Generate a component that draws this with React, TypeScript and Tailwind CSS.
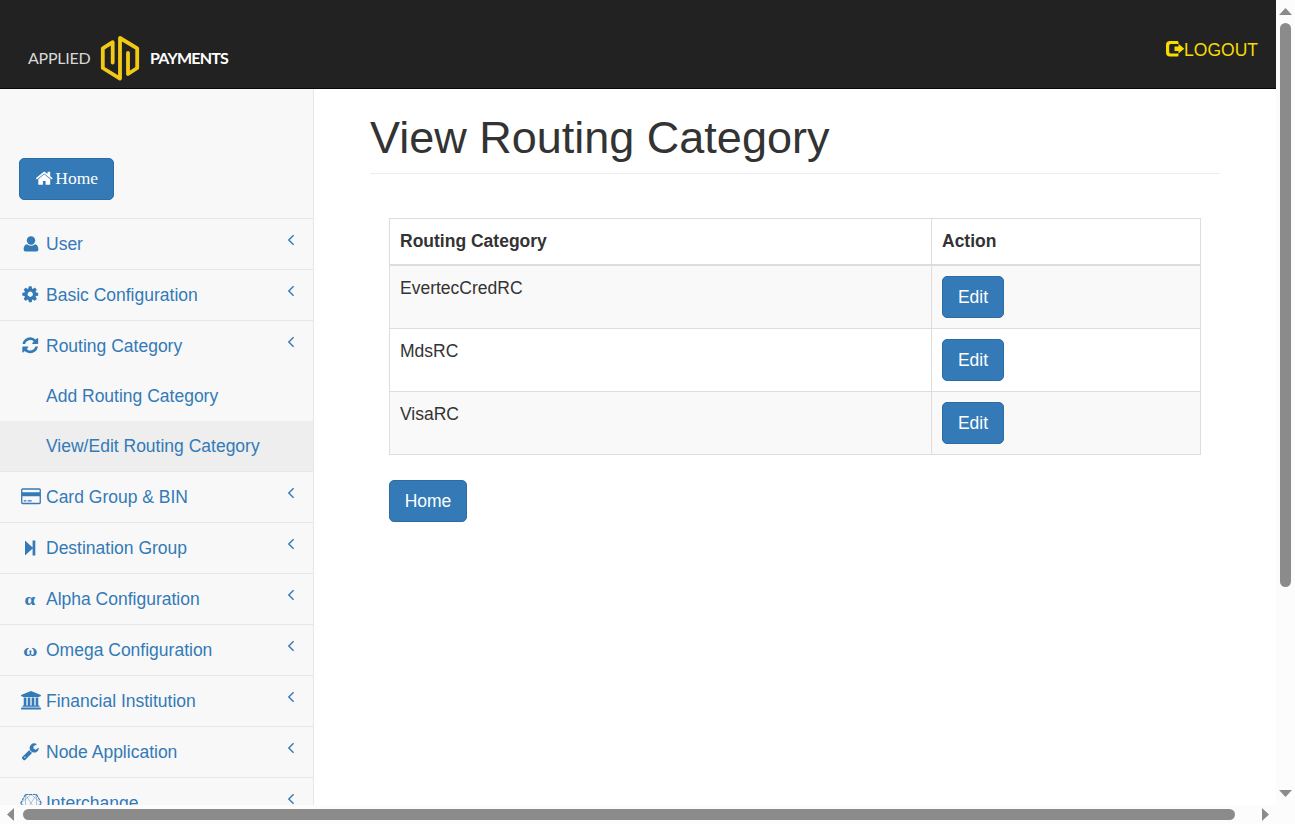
import React from 'react';

const P = {
  home: 'M1472 992v480q0 26-19 45t-45 19h-384v-384h-256v384h-384q-26 0-45-19t-19-45v-480q0-1 .5-3t.5-3l575-474 575 474q1 2 1 6zm223-69l-62 74q-8 9-21 11h-3q-13 0-21-7l-692-577-692 577q-12 8-24 7-13-2-21-11l-62-74q-8-10-7-23.5t11-21.5l719-599q32-26 76-26t76 26l244 204v-195q0-14 9-23t23-9h192q14 0 23 9t9 23v408l219 182q10 8 11 21.5t-7 23.5z',
  user: 'M1536 1399q0 109-62.5 187t-150.5 78h-854q-88 0-150.5-78t-62.5-187q0-85 8.5-160.5t31.5-152 58.5-131 94-89 134.5-34.5q131 128 313 128t313-128q76 0 134.5 34.5t94 89 58.5 131 31.5 152 8.5 160.5zm-256-887q0 159-112.5 271.5t-271.5 112.5-271.5-112.5-112.5-271.5 112.5-271.5 271.5-112.5 271.5 112.5 112.5 271.5z',
  cog: 'M1152 896q0-106-75-181t-181-75-181 75-75 181 75 181 181 75 181-75 75-181zm512-109v222q0 12-8 23t-20 13l-185 28q-19 54-39 91 35 50 107 138 10 12 10 25t-9 23q-27 37-99 108t-94 71q-12 0-26-9l-138-108q-44 23-91 38-16 136-29 186-7 28-36 28h-222q-14 0-24.5-8.5t-11.5-21.5l-28-184q-49-16-90-37l-141 107q-10 9-25 9-14 0-25-11-126-114-165-168-7-10-7-23 0-12 8-23 15-21 51-66.5t54-70.5q-27-50-41-99l-183-27q-13-2-21-12.5t-8-23.5v-222q0-12 8-23t19-13l186-28q14-46 39-92-40-57-107-138-10-12-10-24 0-10 9-23 26-36 98.5-107.5t94.5-71.5q13 0 26 10l138 107q44-23 91-38 16-136 29-186 7-28 36-28h222q14 0 24.5 8.5t11.5 21.5l28 184q49 16 90 37l142-107q9-9 24-9 13 0 25 10 129 119 165 170 7 8 7 22 0 12-8 23-15 21-51 66.5t-54 70.5q26 50 41 98l183 28q13 2 21 12.5t8 23.5z',
  refresh: 'M1639 1056q0 5-1 7-64 268-268 434.5t-478 166.5q-146 0-282.5-55t-243.5-157l-129 129q-19 19-45 19t-45-19-19-45v-448q0-26 19-45t45-19h448q26 0 45 19t19 45-19 45l-137 137q71 66 161 102t187 36q134 0 250-65t186-179q11-17 53-117 8-23 30-23h192q13 0 22.5 9.5t9.5 22.5zm25-800v448q0 26-19 45t-45 19h-448q-26 0-45-19t-19-45 19-45l138-138q-148-137-349-137-134 0-250 65t-186 179q-11 17-53 117-8 23-30 23h-199q-13 0-22.5-9.5t-9.5-22.5v-7q65-268 270-434.5t480-166.5q146 0 284 55.5t245 156.5l130-129q19-19 45-19t45 19 19 45z',
  card: 'M1760 128q66 0 113 47t47 113v1216q0 66-47 113t-113 47h-1600q-66 0-113-47t-47-113v-1216q0-66 47-113t113-47h1600zm-1600 128q-13 0-22.5 9.5t-9.5 22.5v224h1664v-224q0-13-9.5-22.5t-22.5-9.5h-1600zm1600 1280q13 0 22.5-9.5t9.5-22.5v-608h-1664v608q0 13 9.5 22.5t22.5 9.5h1600zm-1504-128v-128h256v128h-256zm384 0v-128h384v128h-384z',
  bank: 'M960 0l960 384v128h-128q0 26-20.5 45t-48.5 19h-1526q-28 0-48.5-19t-20.5-45h-128v-128zm-704 640h256v768h128v-768h256v768h128v-768h256v768h128v-768h256v768h59q28 0 48.5 19t20.5 45v64h-1664v-64q0-26 20.5-45t48.5-19h59v-768zm1595 960q28 0 48.5 19t20.5 45v128h-1920v-128q0-26 20.5-45t48.5-19h1782z',
  wrench: 'M448 1472q0-26-19-45t-45-19-45 19-19 45 19 45 45 19 45-19 19-45zm644-420l-682 682q-37 37-90 37-52 0-91-37l-106-108q-38-36-38-90 0-53 38-91l681-681q39 98 114.5 173.5t173.5 114.5zm634-435q0 39-23 106-47 134-164.5 217.5t-258.5 83.5q-185 0-316.5-131.5t-131.5-316.5 131.5-316.5 316.5-131.5q58 0 121.5 16.5t107.5 46.5q16 11 16 28t-16 28l-293 169v224l193 107q5-3 79-48.5t135.5-81 70.5-35.5q15 0 23.5 10t8.5 25z',
};

function Glyph({ d, wide = false }: { d: string; wide?: boolean }) {
  return (
    <svg viewBox={wide ? '0 0 1920 1792' : '0 0 1792 1792'} className={wide ? 'mb-px ml-px h-[18.500px] w-[20px]' : 'mb-px ml-px h-[18.500px] w-[18.500px]'} fill="currentColor">
      <path d={d} />
    </svg>
  );
}

function Person() {
  return (
    <svg viewBox="0 0 16 16" className="ml-px h-4 w-4" fill="currentColor">
      <circle cx="8" cy="4.500" r="4.200" />
      <path d="M4 8.300Q8 11.300 12 8.300 15.400 9 15.400 13.500 15.400 15.600 13.500 15.600H2.500Q.6 15.600.6 13.500.6 9 4 8.300z" />
    </svg>
  );
}

function StepForward() {
  return (
    <svg viewBox="0 0 12 16" className="h-4 w-3" fill="currentColor">
      <path d="M1 .5 8.600 7.600V.6h2.700v14.800H8.600V8.400L1 15.500z" />
    </svg>
  );
}

function Mesh() {
  return (
    <svg viewBox="0 0 22 20" className="ml-px h-5 w-[22px] shrink-0" fill="none" stroke="currentColor">
      <path d="M5.500 1.500h11l4.700 8.500-4.700 8.500h-11L.8 10z" strokeWidth="1.1" strokeDasharray="3 .6" />
      <path d="M5.500 1.500 16.500 18.500M16.500 1.500 5.500 18.500M5.500 2v16M16.500 2v16M1 10l10-8.500L21 10l-10 8.500z" strokeWidth=".4" />
    </svg>
  );
}

function Greek({ children }: { children: string }) {
  return <span className="mt-px scale-x-110 font-['Liberation_Serif',serif] text-[17.500px] font-bold">{children}</span>;
}

function Row({ icon, label, children }: { icon: React.ReactNode; label: string; children?: React.ReactNode }) {
  return (
    <li className="border-b border-[#e7e7e7]">
      <a className="flex h-[50px] items-center pl-[19px] pr-[18px]">
        <span className="flex w-[22px] shrink-0 items-center justify-center">{icon}</span>
        <span className="ml-[5px] flex-1 whitespace-nowrap">{label}</span>
        <svg viewBox="0 0 8 12" className="mb-[8px] h-3 w-2" fill="none" stroke="currentColor" strokeWidth="1.4">
          <path d="M6.600 1.200 1.800 6l4.800 4.800" />
        </svg>
      </a>
      {children}
    </li>
  );
}

const btn =
  'flex h-[42px] items-center justify-center rounded-[5px] border border-[#2e6da4] bg-[#337ab7] text-white';

function Logo() {
  return (
    <div className="flex h-[46px] items-center font-['Lato',sans-serif] text-[16px] leading-none text-white">
      <span className="w-[72px] whitespace-nowrap pl-px font-normal text-[#d8d8d8] tracking-[-0.250px]">APPLIED</span>
      <svg viewBox="99 34.600 42 47" className="h-[47px] w-[42px]" fill="none" stroke="#f2ca13" strokeWidth="3.800" strokeLinejoin="round" strokeLinecap="round">
        <path d="M112.700 62.200V41.800L102.800 48v19.600L120 78.200V37.600L137.200 48v19.600L128 73.600V52.500" />
      </svg>
      <span className="ml-[9px] whitespace-nowrap font-bold tracking-[-0.800px]">PAYMENTS</span>
    </div>
  );
}

export default function App() {
  return (
    <div className="flex h-[824px] w-[1295px] flex-col overflow-hidden bg-white font-['Liberation_Sans',Arial,sans-serif] text-[17.5px] leading-[25px] text-[#333]">
      <div className="flex h-[805px]">
        <div className="flex w-[1276px] flex-col overflow-hidden">
          <header className="flex h-[89px] shrink-0 justify-between border-b border-[#080808] bg-[#222]">
            <div className="pl-[27px] pt-[35px]">
              <Logo />
            </div>
            <a className="mt-[37px] flex h-[26px] items-center pr-[18px] text-[#f6dc00]">
              <svg viewBox="0 0 18 18" className="mb-[2px] h-[18px] w-[18px] overflow-visible" fill="currentColor">
                <path d="M4 1h7.500q1 0 1 1.200V4H4.700Q3.200 4 3.200 5.500v6.500Q3.200 13.500 4.700 13.500h7.800v1.800q0 1.200-1 1.200H4q-4 0-4-4V5q0-4 4-4z" />
                <path d="M8.500 6.500h4V3.800L18.300 8.800 12.500 13.500V11h-4z" />
              </svg>
              LOGOUT
            </a>
          </header>
          <div className="flex min-h-0 flex-1">
            <aside className="w-[314px] shrink-0 overflow-hidden border-r border-[#e7e7e7] bg-[#f8f8f8] text-[#337ab7]">
              <div className="h-[130px] border-b border-[#e7e7e7] pl-[19px] pt-[69px]">
                <a className={`${btn} w-[95px] gap-[2px] pb-px pr-px font-['Liberation_Serif',serif]`}>
                  <Glyph d={P.home} />
                  Home
                </a>
              </div>
              <ul>
                <Row icon={<Person />} label="User" />
                <Row icon={<Glyph d={P.cog} />} label="Basic Configuration" />
                <Row icon={<Glyph d={P.refresh} />} label="Routing Category">
                  <a className="flex h-[50px] items-center pl-[46px]">Add Routing Category</a>
                  <a className="flex h-[50px] items-center bg-[#eee] pl-[46px]">View/Edit Routing Category</a>
                </Row>
                <Row icon={<Glyph d={P.card} wide />} label="Card Group &amp; BIN" />
                <Row icon={<StepForward />} label="Destination Group" />
                <Row icon={<Greek>α</Greek>} label="Alpha Configuration" />
                <Row icon={<Greek>ω</Greek>} label="Omega Configuration" />
                <Row icon={<Glyph d={P.bank} wide />} label="Financial Institution" />
                <Row icon={<Glyph d={P.wrench} />} label="Node Application" />
                <Row icon={<Mesh />} label="Interchange" />
              </ul>
            </aside>
            <main className="w-[906px] pl-[56px]">
              <h1 className="h-[85px] border-b border-[#eee] pt-[24px] text-[45px] leading-[50px]">View Routing Category</h1>
              <div className="pl-[19px] pt-[44px]">
                <table className="w-[812px] table-fixed border-collapse border border-[#ddd]">
                  <colgroup>
                    <col className="w-[542px]" />
                    <col />
                  </colgroup>
                  <thead>
                    <tr className="h-[46px] text-left align-top">
                      <th className="border border-b-2 border-[#ddd] px-[10px] pt-[10px]">Routing Category</th>
                      <th className="border border-b-2 border-[#ddd] px-[10px] pt-[10px]">Action</th>
                    </tr>
                  </thead>
                  <tbody>
                    {['EvertecCredRC', 'MdsRC', 'VisaRC'].map((name) => (
                      <tr key={name} className="h-[63px] align-top odd:bg-[#f9f9f9]">
                        <td className="border border-[#ddd] px-[10px] pt-[10px]">{name}</td>
                        <td className="border border-[#ddd] px-[10px] py-[10px]">
                          <a className={`${btn} w-[62px] pt-[2px]`}>Edit</a>
                        </td>
                      </tr>
                    ))}
                  </tbody>
                </table>
                <a className={`${btn} mt-[25px] w-[78px] pt-[2px]`}>Home</a>
              </div>
            </main>
          </div>
        </div>
        <div className="flex w-[19px] flex-col items-center bg-[#fcfcfc]">
          <svg viewBox="0 0 13 7" className="mt-[8px] h-[7px] w-[13px]" fill="#8b8b8b">
            <path d="M6.500 0 13 7H0z" />
          </svg>
          <div className="mt-[8px] h-[564px] w-[11px] rounded-full bg-[#8b8b8b]" />
          <svg viewBox="0 0 13 7" className="mt-[203px] h-[7px] w-[13px]" fill="#8b8b8b">
            <path d="M0 0h13L6.500 7z" />
          </svg>
        </div>
      </div>
      <div className="flex h-[19px] items-center bg-[#fcfcfc]">
        <svg viewBox="0 0 7 13" className="ml-[7px] h-[13px] w-[7px]" fill="#8b8b8b">
          <path d="M7 0v13L0 6.500z" />
        </svg>
        <div className="ml-[9px] h-[11px] w-[1212px] rounded-full bg-[#8b8b8b]" />
        <svg viewBox="0 0 7 13" className="ml-[27px] h-[13px] w-[7px]" fill="#8b8b8b">
          <path d="M0 0v13l7-6.500z" />
        </svg>
      </div>
    </div>
  );
}
